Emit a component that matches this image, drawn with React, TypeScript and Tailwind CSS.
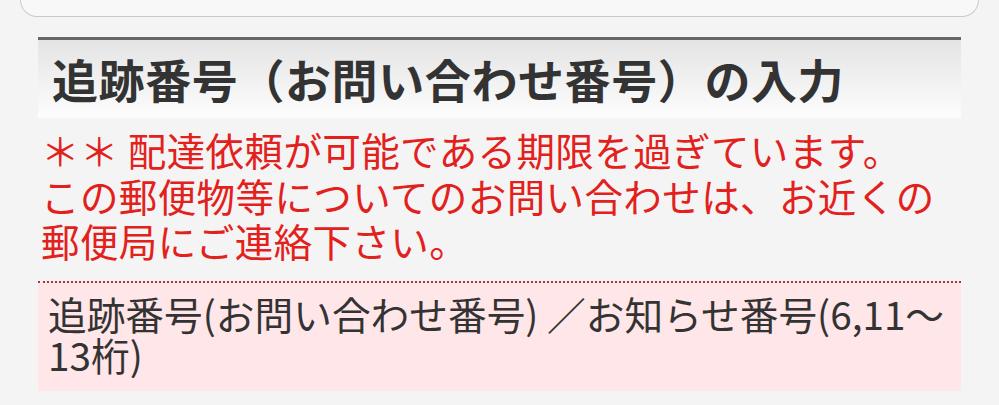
import React from "react";

export default function App() {
  return (
    <div
      className="w-[999px] h-[405px] overflow-hidden bg-[#f4f4f4]"
      style={{ fontFamily: '"Noto Sans CJK JP", "Noto Sans", sans-serif' }}
    >
      <div className="mx-[20px] h-[17px] rounded-b-[20px] border-[1.5px] border-t-0 border-[#c9c9c9] bg-[#f8f8f8]" />
      <div className="mx-[38px] mt-[20px]">
        <div className="border-t-[3px] border-[#666666] bg-gradient-to-b from-[#e4e4e4] to-[#fdfdfd] h-[81px] flex items-center pl-[14px] pb-[3px]">
          <h2 className="text-[46px] leading-none font-bold text-[#333333] tracking-[0.6px]">
            追跡番号（お問い合わせ番号）の入力
          </h2>
        </div>
        <p className="mt-[9px] pl-[3px] text-[38.5px] leading-[45.5px] text-[#e2211c] tracking-[0.4px] whitespace-nowrap">
          ＊＊ 配達依頼が可能である期限を過ぎています。
          <br />
          この郵便物等についてのお問い合わせは、お近くの
          <br />
          郵便局にご連絡下さい。
        </p>
        <div className="mt-[17px] border-t-[2px] border-dotted border-[#a8353a] bg-[#ffe6e8] pl-[10px] pt-[10px] pb-[16px] text-[38.7px] leading-[41px] text-[#333333] whitespace-nowrap">
          追跡番号(お問い合わせ番号) ／お知らせ番号(6,11〜
          <br />
          13桁)
        </div>
      </div>
    </div>
  );
}
